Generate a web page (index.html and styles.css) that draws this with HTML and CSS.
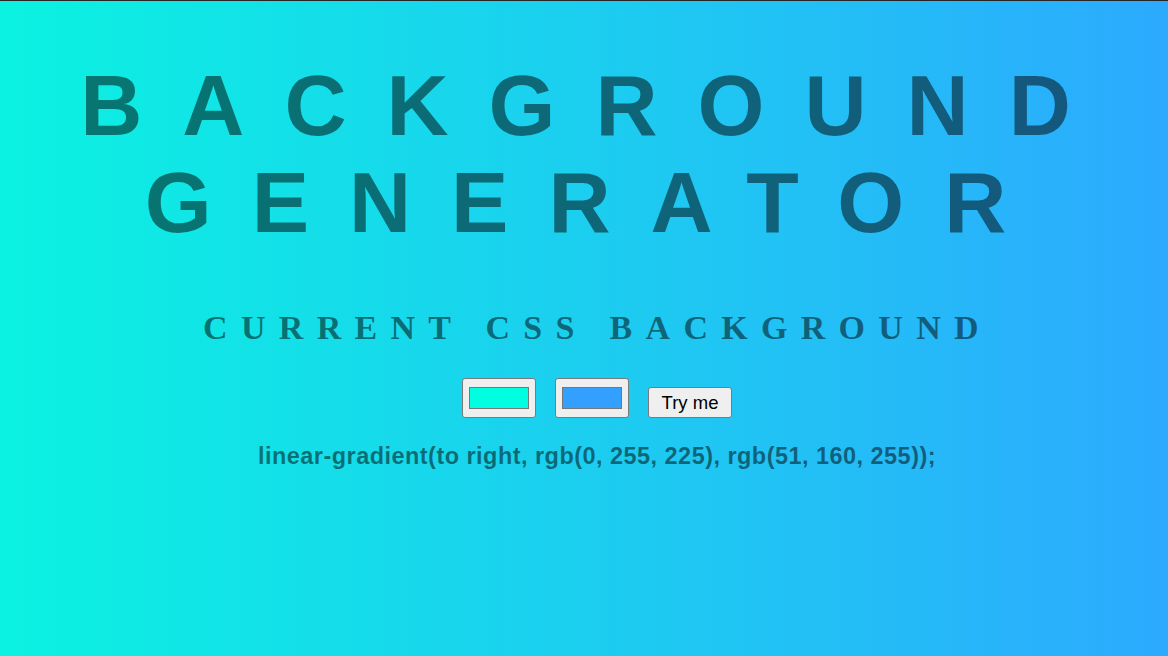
FILE: index.html
```html
<!DOCTYPE html>
<html lang="en">
<head>
<meta charset="utf-8">
<title>Background Generator</title>
<link rel="stylesheet" href="styles.css">
</head>
<body>
  <main class="page">
    <h1 class="title">Background Generator</h1>
    <h3 class="subtitle">Current CSS Background</h3>
    <div class="controls">
      <input class="color-input" type="color" name="color1" value="#00ffe1">
      <input class="color-input" type="color" name="color2" value="#33a0ff">
      <button class="try-btn" type="button">Try me</button>
    </div>
    <p class="css-output">linear-gradient(to right, rgb(0, 255, 225), rgb(51, 160, 255));</p>
  </main>
</body>
</html>
```
FILE: styles.css
```css
html {
  height: 100%;
  background: linear-gradient(to right, #0bf2e1, #2caafe);
  border-top: 1px solid #262626;
  box-sizing: border-box;
}

body {
  margin: 0;
  min-height: 100%;
  color: rgba(0, 0, 0, 0.5);
  font-family: "Liberation Sans", Arial, sans-serif;
}

.page {
  padding: 0 0 0 26px;
  text-align: center;
}

.title {
  margin: 0;
  padding: 56px 3px 0 0;
  font-family: "Liberation Sans", Arial, sans-serif;
  font-size: 86px;
  font-weight: 700;
  line-height: 97px;
  letter-spacing: 40px;
  text-transform: uppercase;
}

.subtitle {
  margin: 58px 0 0;
  padding-left: 1px;
  font-family: "Liberation Serif", "Times New Roman", serif;
  font-size: 34px;
  font-weight: 700;
  line-height: normal;
  letter-spacing: 13.3px;
  text-transform: uppercase;
}

.controls {
  display: flex;
  justify-content: center;
  align-items: flex-end;
  gap: 19px;
  margin-top: 31px;
}

.color-input {
  -webkit-appearance: none;
  appearance: none;
  box-sizing: border-box;
  width: 74px;
  height: 40px;
  margin: 0;
  padding: 0;
  border: 1px solid #7a7a7a;
  border-radius: 3px;
  background: #efefef;
  cursor: pointer;
}

.color-input::-webkit-color-swatch-wrapper {
  padding: 8px 6px 8px 6px;
}

.color-input::-webkit-color-swatch {
  border: 1px solid #777;
  border-radius: 0;
}

.try-btn {
  box-sizing: border-box;
  height: 31px;
  margin: 0;
  padding: 4px 13px;
  border: 1px solid #7a7a7a;
  border-radius: 3px;
  background: #efefef;
  color: #000;
  font-family: "Liberation Sans", Arial, sans-serif;
  font-size: 18.5px;
  line-height: 21px;
}

.css-output {
  margin: 25px 0 0;
  font-family: "Liberation Sans", Arial, sans-serif;
  font-size: 23.5px;
  font-weight: 700;
  letter-spacing: 0.46px;
  line-height: normal;
}
```
